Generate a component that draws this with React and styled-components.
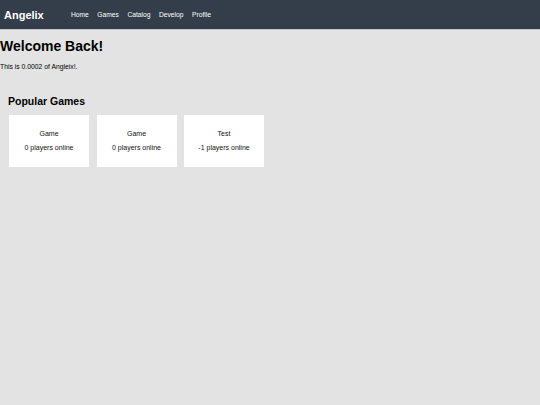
import React from "react";
import styled, { createGlobalStyle } from "styled-components";

const GlobalStyle = createGlobalStyle`
  html, body {
    margin: 0;
    padding: 0;
    background: #e3e3e3;
    font-family: "Liberation Sans", Arial, sans-serif;
    color: #000;
  }
`;

const games = [
  { name: "Game", players: 0 },
  { name: "Game", players: 0 },
  { name: "Test", players: -1 },
];

const App = () => {
  return (
    <>
      <GlobalStyle />
      <Page>
        <Header>
          <Logo>Angelix</Logo>
          <Nav>
            <NavLink>Home</NavLink>
            <NavLink>Games</NavLink>
            <NavLink>Catalog</NavLink>
            <NavLink>Develop</NavLink>
            <NavLink>Profile</NavLink>
          </Nav>
        </Header>
        <Title>Welcome Back!</Title>
        <Intro>This is 0.0002 of Angleix!.</Intro>
        <Section>
          <SectionTitle>Popular Games</SectionTitle>
          <GameList>
            {games.map((game, i) => (
              <GameCard key={i}>
                <GameName>{game.name}</GameName>
                <GamePlayers>{game.players} players online</GamePlayers>
              </GameCard>
            ))}
          </GameList>
        </Section>
      </Page>
    </>
  );
};

const Page = styled.div`
  min-height: 405px;
  background: #e3e3e3;
`;

const Header = styled.header`
  display: flex;
  align-items: center;
  height: 29px;
  padding: 0 4px;
  background: #343e4a;
  border-bottom: 1px solid #c3c6c9;
`;

const Logo = styled.div`
  font-size: 11px;
  font-weight: bold;
  color: #fff;
  width: 67px;
`;

const Nav = styled.nav`
  display: flex;
  gap: 8.5px;
`;

const NavLink = styled.span`
  font-size: 6.7px;
  color: #fff;
  cursor: pointer;
`;

const Title = styled.h1`
  margin: 8px 0 0;
  font-size: 14px;
  line-height: 16px;
  font-weight: bold;
`;

const Intro = styled.p`
  margin: 8.5px 0 0;
  font-size: 6.8px;
  line-height: 8px;
`;

const Section = styled.section`
  padding: 24.5px 8px 0;
`;

const SectionTitle = styled.h2`
  margin: 0;
  font-size: 10.5px;
  line-height: 12px;
  font-weight: bold;
`;

const GameList = styled.div`
  display: flex;
  gap: 7.5px;
  margin-top: 8px;
  padding-left: 1px;
`;

const GameCard = styled.div`
  width: 80px;
  height: 52px;
  background: #fff;
  display: flex;
  flex-direction: column;
  align-items: center;
  padding-top: 15.3px;
  box-sizing: border-box;
`;

const GameName = styled.div`
  font-size: 7px;
  line-height: 8px;
  color: #111;
`;

const GamePlayers = styled.div`
  margin-top: 6px;
  font-size: 7px;
  line-height: 8px;
  color: #111;
`;

export default App;
